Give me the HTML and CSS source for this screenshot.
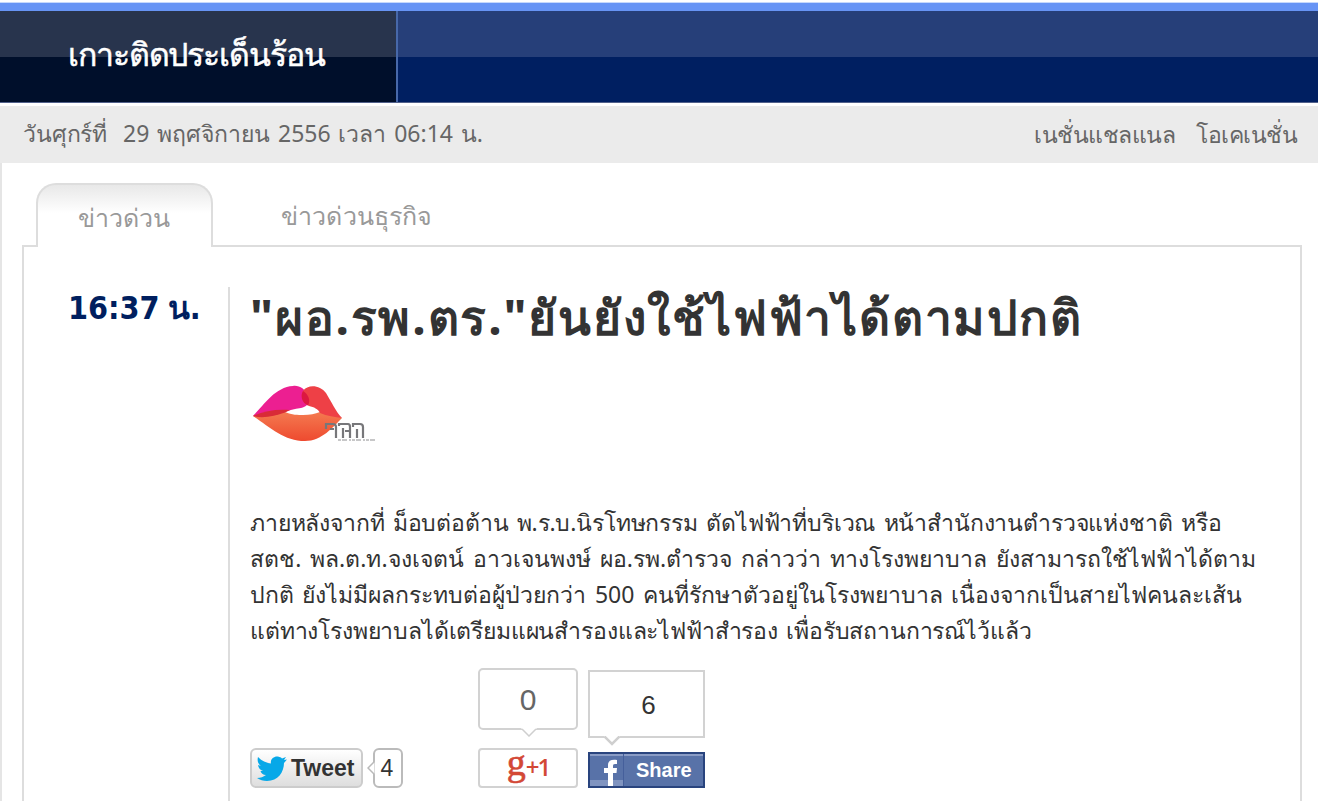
FILE: index.html
```html
<!DOCTYPE html>
<html lang="th">
<head>
  <meta charset="UTF-8">
  <title>ข่าวด่วน</title>
  <link rel="stylesheet" href="styles.css">
</head>
<body>

  <header class="header">
    <div class="header-title"><span>เกาะติดประเด็นร้อน</span></div>
  </header>

  <div class="topbar">
    <div class="date"><span class="day">วันศุกร์ที่</span><span class="full-date">29 พฤศจิกายน 2556 เวลา 06:14 น.</span></div>
    <nav class="links">
      <a class="link-channel">เนชั่นแชลแนล</a>
      <a class="link-ok">โอเคเนชั่น</a>
    </nav>
  </div>

  <main class="page">
    <div class="tabs">
      <div class="tab active"><span>ข่าวด่วน</span></div>
      <div class="tab business"><span>ข่าวด่วนธุรกิจ</span></div>
    </div>

    <div class="news">
      <div class="time"><span>16:37 น.</span></div>
      <article class="article">
        <h1><span>"ผอ.รพ.ตร."ยันยังใช้ไฟฟ้าได้ตามปกติ</span></h1>

        <svg class="lips" width="128" height="60" viewBox="0 0 128 60">
          <defs>
            <linearGradient id="lower" x1="0" y1="0" x2="0" y2="1">
              <stop offset="0" stop-color="#f47a50"/>
              <stop offset="1" stop-color="#ee4a2f"/>
            </linearGradient>
          </defs>
          <path d="M3 33C14 31 24 28 35 29C42 32 48 32 53 32C60 32 65 31 70 29C79 30 86 32 92 35C83 44 72 58 55 58C34 58 20 44 3 33Z" fill="url(#lower)"/>
          <path d="M3 33C14 22 25 4 43 3C49 2 55 6 58 12C61 19 58 23 51 25C44 26 39 27 35 29C24 30 14 34 3 33Z" fill="#ec1f91"/>
          <path d="M53 8C58 1 70 2 76 10C81 18 86 29 92 35C85 34 77 33 70 30C68 26 64 24 59 23C53 20 50 13 53 8Z" fill="#ee4046"/>
          <path d="M53 8C58 11 61 17 58 22.500C52 20 50 13 53 8Z" fill="#dc1740"/>
          <path d="M3 33C14 28 26 26 40 27L35 29.500C25 33 13 36 3 33Z" fill="#d92b37"/>
          <g fill="none" stroke="#77777a" stroke-width="2.200">
            <path d="M76 46V41H83Q86 41 86 44V55M89 43V41H98Q100 41 100 44V55M93 45V55M103 44V41H110Q113 41 113 44V55M107 46V55M80 46H84M95 48H99"/>
          </g>
          <path d="M88 57H127" stroke="#b5b5b7" stroke-width="1.500" stroke-dasharray="3 1 5 2 2 1"/>
        </svg>

        <p class="body-text">
          <span class="line line1">ภายหลังจากที่ ม็อบต่อต้าน พ.ร.บ.นิรโทษกรรม ตัดไฟฟ้าที่บริเวณ หน้าสำนักงานตำรวจแห่งชาติ หรือ</span>
          <span class="line line2">สตช. พล.ต.ท.จงเจตน์ อาวเจนพงษ์ ผอ.รพ.ตำรวจ กล่าวว่า ทางโรงพยาบาล ยังสามารถใช้ไฟฟ้าได้ตาม</span>
          <span class="line line3">ปกติ ยังไม่มีผลกระทบต่อผู้ป่วยกว่า 500 คนที่รักษาตัวอยู่ในโรงพยาบาล เนื่องจากเป็นสายไฟคนละเส้น</span>
          <span class="line line4">แต่ทางโรงพยาบลได้เตรียมแผนสำรองและไฟฟ้าสำรอง เพื่อรับสถานการณ์ไว้แล้ว</span>
        </p>

        <div class="share-row">
          <div class="tweet">
            <div class="tweet-button">
              <svg width="30" height="25" viewBox="0 0 30 25">
                <path d="M1 1C5 5 9 7 14 7.5C13 3 17 0 21 0.5C23 1 24 1.5 25 2.5L29 1L27 4L30 3.5L27 7C27 16 21 25 10 25C6 25 3 24 0 22C4 22 6 21 9 19C6 19 4 17 3.500 15H6C3 14 1.500 12 1 9L4 10C1 8 0 4 1 1Z" fill="#07a8e8"/>
              </svg>
              <span>Tweet</span>
            </div>
            <div class="tweet-count">
              <svg class="tweet-arrow" width="8" height="14" viewBox="0 0 8 14"><path d="M7.500 0.500L1 7L7.500 13.500" fill="#fff" stroke="#b9b9b9" stroke-width="1.500"/></svg>
              <span>4</span>
            </div>
          </div>

          <div class="plus">
            <div class="plus-count"><span>0</span>
              <svg class="bubble-tip plus-tip" width="16" height="9" viewBox="0 0 16 9"><path d="M0 0H16L8 8Z" fill="#fff"/><path d="M1 1L8 8L15 1" fill="none" stroke="#cfcfcf" stroke-width="1.500"/></svg>
            </div>
            <div class="plus-button"><span class="g">g</span><span class="one">+1</span></div>
          </div>

          <div class="facebook">
            <div class="fb-count"><span>6</span>
              <svg class="bubble-tip fb-tip" width="16" height="10" viewBox="0 0 16 10"><path d="M0 0H16L8 8Z" fill="#fff"/><path d="M0.500 0.500L8 8L15.500 0.500" fill="none" stroke="#cfcfcf" stroke-width="2.500"/></svg>
            </div>
            <div class="fb-button">
              <svg width="34" height="32" viewBox="0 0 34 32">
                <path d="M0 26H33V32H0Z" fill="#8094c0"/>
                <path d="M18 32V19H14V14H18V11C18 7 21 5 27 6V10C24 10 23 10 23 12V14H27L26.500 19H23V32Z" fill="#fff"/>
                <path d="M33.500 0V32" stroke="#455f9b"/>
              </svg>
              <span>Share</span>
            </div>
          </div>
        </div>
      </article>
    </div>
  </main>

</body>
</html>
```

FILE: styles.css
```css
* {
  box-sizing: border-box;
}
body {
  margin: 0;
  height: 801px;
  overflow: hidden;
  background-color: #fff;
  font-family: Tahoma, "Noto Sans", sans-serif;
  font-size: 23px;
  color: #333;
  display: flex;
  flex-direction: column;
}
span, a {
  white-space: nowrap;
}
.header {
  margin-top: 3px;
  height: 100px;
  flex: none;
  border-top: 8px solid #6794f5;
  border-bottom: 1px solid #52618b;
  background: linear-gradient(#263f79 0 46px, #001f61 46px);
  box-shadow: 0 -1px #c6d8fc;
}
.header-title {
  width: 398px;
  height: 91px;
  padding-left: 68px;
  border-right: 2px solid #4768a9;
  background: linear-gradient(#28344d 0 46px, #000f2b 46px);
  color: #fff;
  font-size: 32px;
  letter-spacing: -1.1px;
  -webkit-text-stroke: 0.5px #fff;
  line-height: 86px;
}
.topbar {
  margin-top: 3px;
  height: 57px;
  flex: none;
  padding: 0 21px 0 23px;
  background-color: #ebebeb;
  color: #666;
  display: flex;
  justify-content: space-between;
  line-height: 55px;
}
.date {
  display: flex;
  gap: 16px;
}
.day {
  letter-spacing: -0.15px;
}
.full-date {
  word-spacing: 1.8px;
}
.links {
  display: flex;
  gap: 21px;
  line-height: 56px;
}
.link-channel {
  letter-spacing: -0.5px;
}
.link-ok {
  letter-spacing: -0.5px;
}
.page {
  flex: 1;
  min-height: 0;
  padding: 20px 16px 0 20px;
  border-left: 2px solid #e5e5e5;
  display: flex;
  flex-direction: column;
}
.tabs {
  height: 64px;
  flex: none;
  padding-left: 14px;
  display: flex;
  color: #999;
  font-size: 25px;
}
.tab.active {
  position: relative;
  z-index: 1;
  width: 177px;
  height: 64px;
  border: 2px solid #ddd;
  border-bottom: 0;
  border-radius: 20px 20px 0 0;
  background: linear-gradient(#e8e8e8, #fff 28px);
  padding-left: 40px;
  line-height: 64px;
}
.tab.business {
  padding-left: 68px;
  line-height: 64px;
  letter-spacing: 0.15px;
}
.news {
  width: 1280px;
  flex: 1;
  min-height: 0;
  margin-top: -2px;
  border: 2px solid #ddd;
  border-bottom: 0;
  padding: 40px 0 0 44px;
  display: flex;
}
.time {
  width: 162px;
  border-right: 2px solid #ddd;
  color: #001f5f;
  font-family: "DejaVu Sans Condensed", "DejaVu Sans", sans-serif;
  font-stretch: condensed;
  font-size: 32px;
  font-weight: bold;
  line-height: 42px;
  word-spacing: -2px;
}
.article {
  width: 1030px;
  padding-left: 20px;
}
h1 {
  margin: 0;
  height: 96px;
  font-size: 48px;
  letter-spacing: 1.8px;
  line-height: 60px;
}
.lips {
  display: block;
}
.body-text {
  margin: 61px 0 0;
  height: 164px;
  line-height: 36px;
  word-spacing: 2.5px;
}
.line {
  display: block;
}
.line1 {
  letter-spacing: -0.16px;
}
.line2 {
  letter-spacing: 0.05px;
}
.line4 {
  letter-spacing: -0.16px;
}
.share-row {
  display: flex;
  align-items: flex-end;
  height: 120px;
  font-family: "Liberation Sans", Arial, sans-serif;
}
.tweet {
  width: 228px;
  display: flex;
  gap: 10px;
}
.tweet-button {
  width: 113px;
  height: 40px;
  border: 2px solid #ccc;
  border-radius: 6px;
  background: linear-gradient(#fff, #dedede);
  display: flex;
  align-items: center;
  gap: 4px;
  padding-left: 5px;
  font-size: 23px;
  font-weight: bold;
}
.tweet-count {
  position: relative;
  width: 30px;
  height: 40px;
  border: 2px solid #bbb;
  border-radius: 6px;
  padding-right: 2px;
  text-align: center;
  line-height: 36px;
  font-size: 23px;
}
.tweet-arrow {
  position: absolute;
  left: -8px;
  top: 11px;
}
.plus {
  width: 110px;
}
.plus-count {
  position: relative;
  width: 100px;
  height: 62px;
  margin-bottom: 18px;
  border: 2px solid #d2d2d2;
  border-radius: 5px;
  text-align: center;
  color: #666;
  font-size: 30px;
  line-height: 60px;
}
.bubble-tip {
  position: absolute;
}
.plus-tip {
  left: 41px;
  top: 58px;
}
.plus-button {
  width: 100px;
  height: 40px;
  border: 2px solid #d2d2d2;
  border-radius: 4px;
  color: #d34836;
  display: flex;
  justify-content: center;
  align-items: center;
}
.g {
  font-family: "Liberation Serif", serif;
  font-size: 38px;
  -webkit-text-stroke: 0.6px #d34836;
  line-height: 20px;
  margin-top: -13px;
}
.one {
  font-family: "Open Sans", sans-serif;
  font-size: 24px;
  font-weight: 600;
  letter-spacing: -2px;
  line-height: 32px;
  margin-top: -2px;
}
.facebook {
  width: 117px;
}
.fb-count {
  position: relative;
  height: 68px;
  margin-bottom: 14px;
  border: 2px solid #d2d2d2;
  padding-left: 4px;
  text-align: center;
  font-size: 26px;
  line-height: 66px;
}
.fb-tip {
  left: 14px;
  top: 64px;
}
.fb-button {
  height: 36px;
  border: 2px solid #29447e;
  background-color: #5872a8;
  box-shadow: inset 0 2px #8a9cc5;
  color: #fff;
  display: flex;
  align-items: center;
  gap: 12px;
  font-size: 20px;
  font-weight: bold;
}
```
